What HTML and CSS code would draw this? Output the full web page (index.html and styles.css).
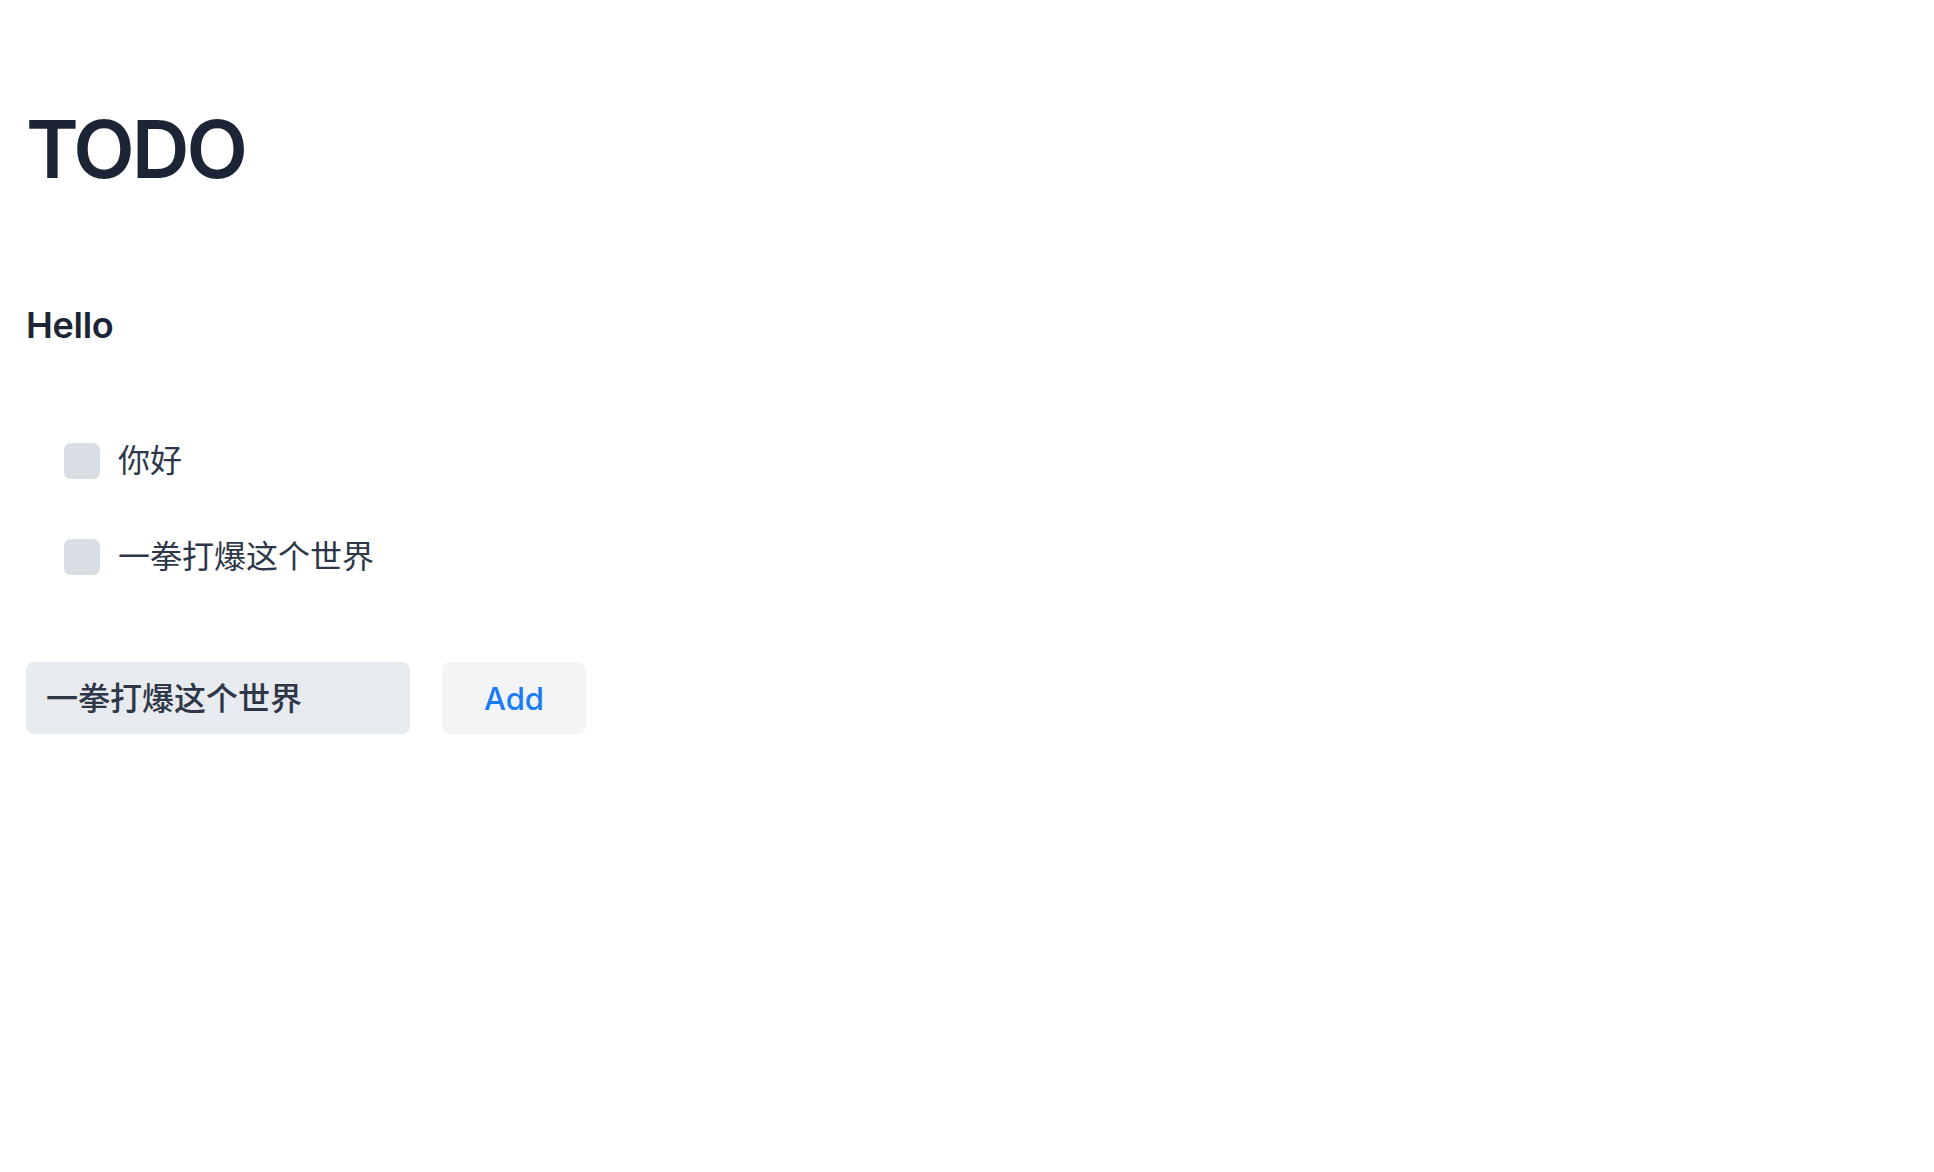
FILE: index.html
```html
<!DOCTYPE html>
<html lang="zh">
<head>
<meta charset="UTF-8">
<meta name="viewport" content="width=device-width, initial-scale=1.0">
<title>TODO</title>
<link rel="stylesheet" href="styles.css">
</head>
<body>
<div class="todo-app">
  <h1 class="title">TODO</h1>
  <h2 class="subtitle">Hello</h2>
  <ul class="todo-list">
    <li class="todo-item">
      <input type="checkbox" class="todo-check" id="item1">
      <label for="item1">你好</label>
    </li>
    <li class="todo-item">
      <input type="checkbox" class="todo-check" id="item2">
      <label for="item2">一拳打爆这个世界</label>
    </li>
  </ul>
  <div class="add-form">
    <input type="text" class="add-input" value="一拳打爆这个世界">
    <button class="add-btn">Add</button>
  </div>
</div>
</body>
</html>
```

FILE: styles.css
```css
body {
  margin: 0;
  background: #fff;
  font-family: Inter, "Noto Sans CJK SC", sans-serif;
  color: #1a202c;
}

.todo-app {
  padding: 101px 26px 40px;
}

.title {
  margin: 0;
  font-size: 80px;
  font-weight: 600;
  letter-spacing: -3px;
  line-height: 96px;
  color: #1b2535;
}

.subtitle {
  margin: 107px 0 0;
  font-size: 36px;
  font-weight: 600;
  letter-spacing: -0.3px;
  line-height: 43px;
  color: #1b2535;
}

.todo-list {
  list-style: none;
  margin: 90px 0 0;
  padding: 0 0 0 38px;
  display: flex;
  flex-direction: column;
  gap: 48px;
}

.todo-item {
  display: flex;
  align-items: center;
  gap: 18px;
  height: 48px;
  font-size: 32px;
  line-height: 46px;
  color: #2d3748;
}

.todo-check {
  appearance: none;
  -webkit-appearance: none;
  margin: 0;
  width: 36px;
  height: 36px;
  border-radius: 7px;
  background: #d9dee5;
  cursor: pointer;
}

.add-form {
  display: flex;
  gap: 32px;
  margin-top: 81px;
}

.add-input {
  width: 384px;
  height: 72px;
  box-sizing: border-box;
  padding: 0 20px 4px;
  border: none;
  border-radius: 8px;
  background: #e7eaee;
  font-family: Inter, "Noto Sans CJK SC", sans-serif;
  font-size: 32px;
  font-weight: 500;
  color: #2d3748;
  outline: none;
}

.add-btn {
  width: 144px;
  height: 72px;
  border: none;
  border-radius: 8px;
  background: #f3f4f6;
  font-family: Inter, sans-serif;
  font-size: 31px;
  font-weight: 500;
  color: #1a7cf5;
  cursor: pointer;
}
```
